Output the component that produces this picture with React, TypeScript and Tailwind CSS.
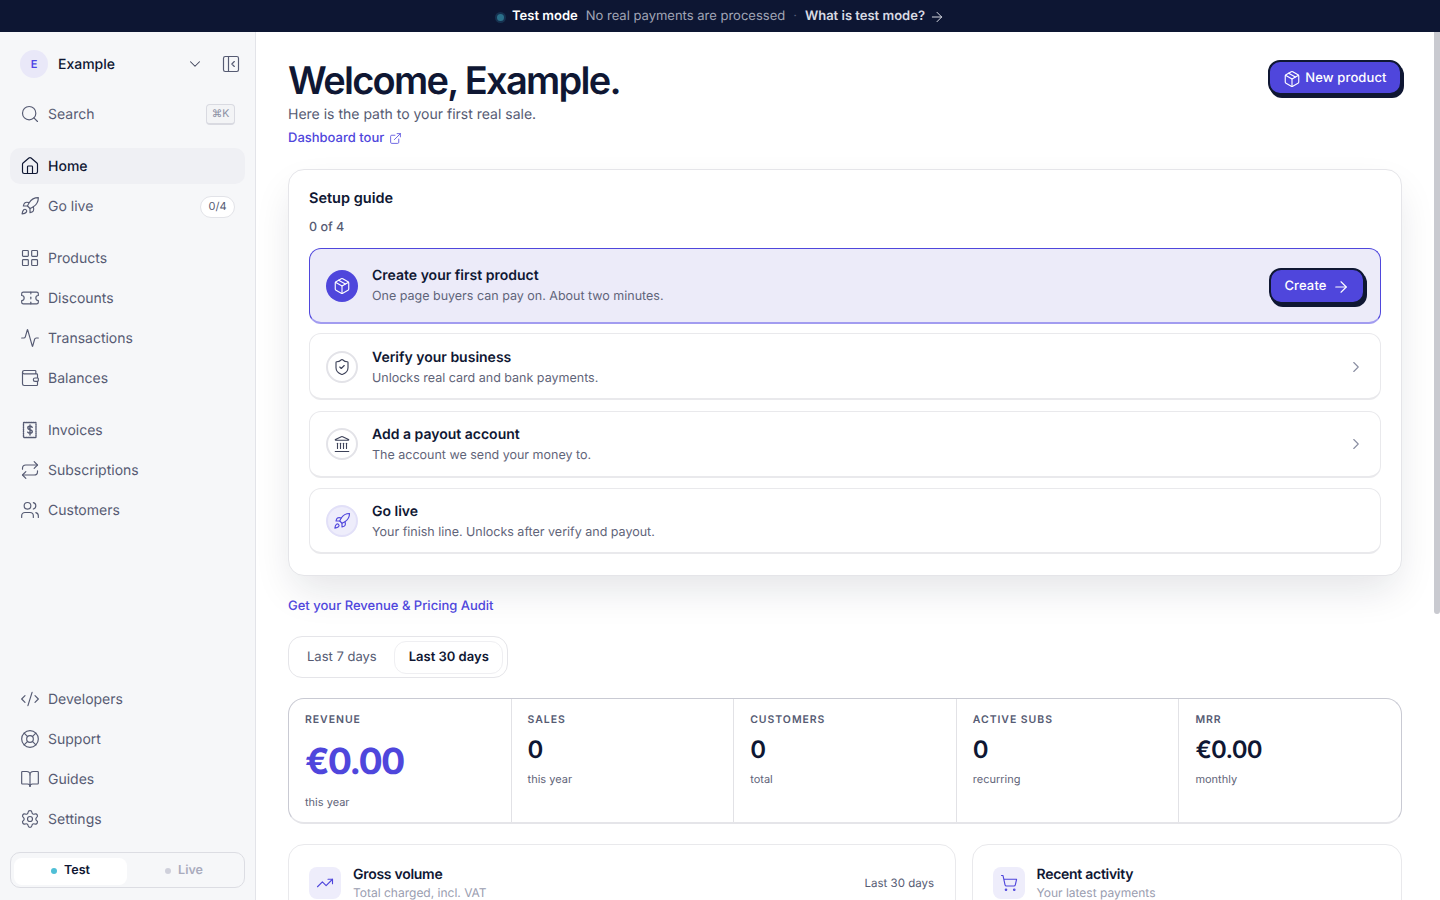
import {
  ArrowRight,
  BookOpen,
  ChevronDown,
  ChevronRight,
  CodeXml,
  Activity,
  ExternalLink,
  House,
  Landmark,
  LayoutGrid,
  LifeBuoy,
  Package,
  PanelLeftClose,
  Repeat,
  Rocket,
  Search,
  Settings,
  ShieldCheck,
  ShoppingCart,
  Ticket,
  TrendingUp,
  Users,
  Wallet,
} from "lucide-react";
import type { ReactNode } from "react";

function InvoiceIcon() {
  return (
    <svg width="20" height="20" viewBox="0 0 20 20" fill="none" stroke="currentColor" strokeWidth="1.4" strokeLinecap="round">
      <rect x="3.5" y="2.5" width="12.5" height="15" rx="0.5" strokeDasharray="1.2 1" />
      <path d="M12.2 7.3c-.4-.7-1.2-1-2.2-1-1.2 0-2.2.6-2.2 1.7 0 2.3 4.5 1.2 4.5 3.6 0 1.1-1 1.7-2.3 1.7-1 0-1.9-.4-2.3-1.1M10 5v10" />
    </svg>
  );
}

function NavItem({ icon, label, right, active }: { icon: ReactNode; label: string; right?: ReactNode; active?: boolean }) {
  return (
    <div
      className={`flex h-9 items-center gap-[8px] rounded-[10px] px-[10px] text-[14px] ${
        active ? "bg-[#eff0f4] font-medium text-[#0f1733]" : "text-[#565b73]"
      }`}
    >
      <span className="flex w-5 shrink-0 justify-center">{icon}</span>
      <span className="flex-1">{label}</span>
      {right}
    </div>
  );
}

function Sidebar() {
  const ic = { size: 20, strokeWidth: 1.4 };
  return (
    <aside className="flex w-[256px] shrink-0 flex-col border-r border-r-[#e3e4e9] bg-[#f6f7f9] px-[10px] pb-3 pt-[18px]">
      <div className="flex h-7 items-center pl-[10px] pr-[4px]">
        <span className="flex h-7 w-7 items-center justify-center rounded-full bg-[#e9e8f8] text-[11px] font-semibold text-[#4f46e5]">E</span>
        <span className="ml-[10px] flex-1 text-[14px] font-medium text-[#0f1733]">Example</span>
        <ChevronDown size={18} strokeWidth={1.4} className="mr-[17px] text-[#3d4259]" />
        <PanelLeftClose size={20} strokeWidth={1.4} className="text-[#565b73]" />
      </div>

      <div className="mt-[14px] flex h-9 items-center gap-[8px] px-[10px] pt-[8px] text-[14px] text-[#565b73]">
        <Search size={20} strokeWidth={1.4} />
        <span className="flex-1">Search</span>
        <span className="flex h-[21px] w-[29px] items-center justify-center rounded border border-[#d9dae1] border-b-2 bg-[#f3f4f6] pt-px text-[10.5px] text-[#8a8ea2]">⌘K</span>
      </div>

      <div className="mt-5 flex flex-col gap-1">
        <NavItem active icon={<House {...ic} />} label="Home" />
        <NavItem
          icon={<Rocket {...ic} />}
          label="Go live"
          right={<span className="mt-px flex h-[22px] w-[35px] items-center justify-center rounded-full border border-[#e2e3e8] bg-white text-[11px] text-[#565b73]">0/4</span>}
        />
      </div>

      <div className="mt-4 flex flex-col gap-1">
        <NavItem icon={<LayoutGrid {...ic} />} label="Products" />
        <NavItem icon={<Ticket {...ic} />} label="Discounts" />
        <NavItem icon={<Activity {...ic} />} label="Transactions" />
        <NavItem icon={<Wallet {...ic} />} label="Balances" />
      </div>

      <div className="mt-4 flex flex-col gap-1">
        <NavItem icon={<InvoiceIcon />} label="Invoices" />
        <NavItem icon={<Repeat {...ic} />} label="Subscriptions" />
        <NavItem icon={<Users {...ic} />} label="Customers" />
      </div>

      <div className="mt-auto flex flex-col gap-1">
        <NavItem icon={<CodeXml {...ic} />} label="Developers" />
        <NavItem icon={<LifeBuoy {...ic} />} label="Support" />
        <NavItem icon={<BookOpen {...ic} />} label="Guides" />
        <NavItem icon={<Settings {...ic} />} label="Settings" />
      </div>

      <div className="mt-[15px] flex h-9 items-center rounded-[10px] border border-[#dcdde3] px-[3px] pb-[2px] pt-[4px] text-[12.5px] font-semibold">
        <div className="flex h-[27px] w-[113px] items-center justify-center gap-[7px] rounded-lg bg-white text-[#0f1733]">
          <span className="h-[6px] w-[6px] rounded-full bg-[#4fbfd6]" />
          Test
        </div>
        <div className="flex h-[27px] flex-1 items-center justify-center gap-[7px] text-[#a9abbd]">
          <span className="h-[6px] w-[6px] rounded-full bg-[#cfd0db]" />
          Live
        </div>
      </div>
    </aside>
  );
}

function PrimaryButton({ children, className }: { children: ReactNode; className: string }) {
  return (
    <div
      className={`flex items-center justify-center rounded-xl border-2 border-[#0f1733] bg-[#4f46dc] pt-[2px] text-[13px] font-medium tracking-[0.01em] text-white shadow-[2px_3px_0_#0f1733] ${className}`}
    >
      {children}
    </div>
  );
}

function StepRow({
  icon,
  title,
  text,
  circle,
  chevron,
}: {
  icon: ReactNode;
  title: string;
  text: string;
  circle: string;
  chevron?: boolean;
}) {
  return (
    <div className="flex h-[67px] items-center rounded-xl border border-[#e9e9ec] border-b-2 pl-4 pr-[15px] pt-px last:h-[66px]">
      <span className={`flex h-8 w-8 shrink-0 items-center justify-center rounded-full border-2 ${circle}`}>{icon}</span>
      <div className="ml-[14px] flex-1 pt-[2px]">
        <div className="text-[14px] font-semibold leading-5 text-[#0f1733]">{title}</div>
        <div className="mt-[2px] text-[12.5px] leading-[18px] text-[#5f6479]">{text}</div>
      </div>
      {chevron && <ChevronRight size={18} strokeWidth={1.5} className="text-[#8a8ea2]" />}
    </div>
  );
}

function Stat({ label, value, note, big }: { label: string; value: string; note: string; big?: boolean }) {
  return (
    <div className="border-r border-r-[#e2e2e6] px-4 pt-[14px] last:border-r-0">
      <div className="text-[10.5px] font-semibold leading-[14px] tracking-[0.09em] text-[#565b73]">{label}</div>
      {big ? (
        <div className="mt-[9px] text-[36px] font-bold leading-[50px] tracking-[-0.05em] text-[#4f46dc]">{value}</div>
      ) : (
        <div className="mt-[7px] text-[24px] font-semibold leading-8 tracking-[-0.03em] text-[#0f1733]">{value}</div>
      )}
      <div className={`text-[11px] leading-4 text-[#5f6479] ${big ? "mt-[8px]" : "mt-[5px]"}`}>{note}</div>
    </div>
  );
}

function PanelHead({ icon, title, text, right }: { icon: ReactNode; title: string; text: string; right?: string }) {
  return (
    <div className="flex items-start pl-5 pr-[21px] pt-[22px]">
      <span className="flex h-8 w-8 shrink-0 items-center justify-center rounded-lg bg-[#eeedfb] text-[#4f46dc]">{icon}</span>
      <div className="-mt-[1px] ml-3 flex-1">
        <div className="text-[14px] font-semibold leading-[18px] tracking-[-0.02em] text-[#0f1733]">{title}</div>
        <div className="mt-[1px] text-[12px] leading-4 text-[#9a9db0]">{text}</div>
      </div>
      {right && <span className="mt-[8px] text-[11.5px] text-[#565b73]">{right}</span>}
    </div>
  );
}

export default function App() {
  return (
    <div className="flex h-screen flex-col overflow-hidden bg-white font-[Inter,sans-serif] [text-rendering:geometricPrecision]">
      <div className="flex h-8 shrink-0 items-center justify-center bg-[#0d1633] pl-[2px] pt-[2px] text-[13px]">
        <span className="mr-[6px] h-[7px] w-[7px] rounded-full bg-[#2a6f8a] shadow-[0_0_0_2px_#16304f]" />
        <span className="ml-[2px] font-semibold text-white">Test mode</span>
        <span className="ml-2 text-[#a1a5b6]">No real payments are processed</span>
        <span className="mx-2 text-[#525a75]">·</span>
        <span className="font-semibold text-[#d8dae3]">What is test mode?</span>
        <ArrowRight size={16} strokeWidth={1.5} className="ml-[4px] text-[#d8dae3]" />
      </div>

      <div className="relative flex min-h-0 flex-1">
        <Sidebar />

        <main className="min-w-0 flex-1 overflow-hidden pl-8 pr-[38px] pt-7">
          <div className="flex items-start justify-between">
            <div>
              <h1 className="text-[38px] font-semibold leading-[42px] tracking-[-0.045em] text-[#0f1733]">Welcome, Example.</h1>
              <p className="mt-[2px] text-[14px] leading-[22px] text-[#565b73]">Here is the path to your first real sale.</p>
              <div className="mt-[2px] flex items-center gap-[5px] text-[13px] font-medium leading-5 text-[#4f46dc]">
                Dashboard tour
                <ExternalLink size={13} strokeWidth={1.5} />
              </div>
            </div>
            <PrimaryButton className="h-[35px] w-[134px] gap-1">
              <Package size={18} strokeWidth={1.5} />
              New product
            </PrimaryButton>
          </div>

          <section className="mt-[21px] rounded-2xl border border-[#e5e5e9] bg-white px-5 pb-[21px] pt-[18px] shadow-[0_18px_40px_-6px_rgba(15,23,51,0.12)]">
            <h2 className="text-[14.5px] font-semibold leading-[22px] text-[#0f1733]">Setup guide</h2>
            <div className="mt-[9px] text-[12.5px] font-medium leading-[18px] text-[#565b73]">0 of 4</div>

            <div className="mt-[11px] flex h-[76px] items-center rounded-xl border border-[#4f46dc] border-b-[#a29cf0] bg-[#ecebf9] border-b-2 pl-4 pr-[15px] pt-px">
              <span className="flex h-8 w-8 shrink-0 items-center justify-center rounded-full bg-[#4f46dc] text-white">
                <Package size={18} strokeWidth={1.5} />
              </span>
              <div className="ml-[14px] flex-1">
                <div className="text-[14px] font-semibold leading-5 text-[#0f1733]">Create your first product</div>
                <div className="mt-[2px] text-[12.5px] leading-[18px] text-[#5f6479]">One page buyers can pay on. About two minutes.</div>
              </div>
              <PrimaryButton className="h-9 w-[96px] gap-[5px]">
                Create
                <ArrowRight size={18} strokeWidth={1.5} />
              </PrimaryButton>
            </div>

            <div className="mt-[9px] flex flex-col gap-[10.5px]">
              <StepRow
                circle="border-[#e3e3e8] text-[#3d4259]"
                icon={<ShieldCheck size={18} strokeWidth={1.5} />}
                title="Verify your business"
                text="Unlocks real card and bank payments."
                chevron
              />
              <StepRow
                circle="border-[#e3e3e8] text-[#3d4259]"
                icon={<Landmark size={18} strokeWidth={1.5} />}
                title="Add a payout account"
                text="The account we send your money to."
                chevron
              />
              <StepRow
                circle="border-[#e2e0f8] bg-[#eeedfb] text-[#4f46dc]"
                icon={<Rocket size={18} strokeWidth={1.5} />}
                title="Go live"
                text="Your finish line. Unlocks after verify and payout."
              />
            </div>
          </section>

          <div className="mt-5 text-[13px] font-medium leading-5 text-[#4f46dc]">Get your Revenue &amp; Pricing Audit</div>

          <div className="mt-5 flex h-[42px] w-fit items-center rounded-[14px] border border-[#e5e5e9] p-1 text-[13px]">
            <span className="pl-[14px] pr-[17px] pt-[2px] text-[#565b73]">Last 7 days</span>
            <span className="flex h-[33px] items-center rounded-xl border border-[#efeff2] pl-[14px] pr-[13px] pt-[2px] font-semibold text-[#0f1733]">Last 30 days</span>
          </div>

          <div className="mt-5 grid h-[126px] grid-cols-[222.6px_222.6px_222.6px_222.6px_1fr] rounded-2xl border border-[#c9cad3] border-b-2 border-b-[#e5e5e9]">
            <Stat big label="REVENUE" value="€0.00" note="this year" />
            <Stat label="SALES" value="0" note="this year" />
            <Stat label="CUSTOMERS" value="0" note="total" />
            <Stat label="ACTIVE SUBS" value="0" note="recurring" />
            <Stat label="MRR" value="€0.00" note="monthly" />
          </div>

          <div className="mt-[20px] grid grid-cols-[668px_1fr] gap-[15.5px]">
            <div className="h-[200px] rounded-2xl border border-[#e9e9ec]">
              <PanelHead
                icon={<TrendingUp size={18} strokeWidth={1.5} />}
                title="Gross volume"
                text="Total charged, incl. VAT"
                right="Last 30 days"
              />
            </div>
            <div className="h-[200px] rounded-2xl border border-[#e9e9ec]">
              <PanelHead icon={<ShoppingCart size={18} strokeWidth={1.5} />} title="Recent activity" text="Your latest payments" />
            </div>
          </div>
        </main>

        {/* fake scrollbar, the page itself doesn't scroll here */}
        <div className="absolute bottom-0 right-0 top-0 w-[7px] bg-white">
          <div className="ml-px h-[582px] w-[6px] rounded-b bg-[#c9cad0]" />
        </div>
      </div>
    </div>
  );
}
